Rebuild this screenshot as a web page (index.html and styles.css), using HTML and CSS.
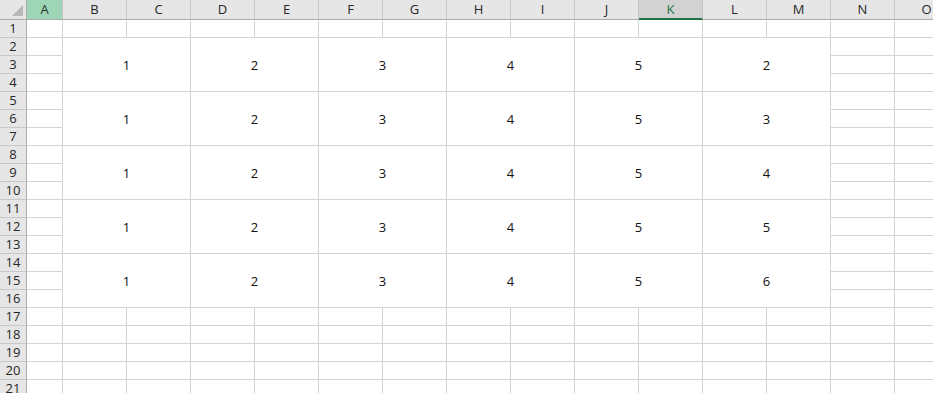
FILE: index.html
```html
<!DOCTYPE html>
<html lang="en">
<head>
  <meta charset="UTF-8">
  <title>Sheet1</title>
  <link rel="stylesheet" href="styles.css">
</head>
<body>

  <div id="sheet" class="sheet"></div>

  <script>
    const cols = ["A","B","C","D","E","F","G","H","I","J","K","L","M","N","O"];
    const rowCount = 21;
    const lastCol = [2, 3, 4, 5, 6];

    const sheet = document.getElementById("sheet");

    function cell(cls, text) {
      const el = document.createElement("div");
      el.className = cls;
      if (text !== undefined) el.textContent = text;
      sheet.appendChild(el);
      return el;
    }

    // header row
    cell("corner");
    cols.forEach(c => {
      let cls = "colhead";
      if (c === "A") cls += " colhead-active";
      if (c === "K") cls += " colhead-sel";
      cell(cls, c);
    });

    // body rows; merged blocks B:C, D:E ... L:M over rows 2-4, 5-7, ...
    for (let r = 1; r <= rowCount; r++) {
      cell("rowhead", r);
      const inBlock = r >= 2 && r <= 16;
      const blockTop = inBlock && (r - 2) % 3 === 0;
      const block = Math.floor((r - 2) / 3);
      for (let ci = 0; ci < cols.length; ci++) {
        if (inBlock && ci >= 1 && ci <= 12) {
          if (blockTop && ci % 2 === 1) {
            const n = (ci + 1) / 2;
            const v = n === 6 ? lastCol[block] : n;
            cell("cell merged", v);
          }
          continue;
        }
        cell("cell");
      }
    }
  </script>
</body>
</html>
```

FILE: styles.css
```css
body {
  margin: 0;
  padding: 0;
  background: #ffffff;
  font-family: 'Open Sans', 'Liberation Sans', sans-serif;
  overflow: hidden;
}

.sheet {
  display: grid;
  grid-template-columns: 27px 36px repeat(14, 64px);
  grid-template-rows: 20px repeat(21, 18px);
  width: 933px;
  height: 393px;
  overflow: hidden;
}

.sheet > div {
  box-sizing: border-box;
}

.corner {
  position: relative;
  background: #e6e6e6;
  border-right: 1px solid #ababab;
  border-bottom: 1px solid #ababab;
}

.corner::after {
  content: "";
  position: absolute;
  right: 3px;
  bottom: 3px;
  width: 0;
  height: 0;
  border-left: 11px solid transparent;
  border-bottom: 11px solid #b7b7b7;
}

.colhead {
  background: #e6e6e6;
  border-right: 1px solid #c6c6c6;
  border-bottom: 1px solid #ababab;
  color: #262626;
  font-size: 13px;
  line-height: 19px;
  text-align: center;
}

.colhead-active {
  background: #9fd5b7;
  color: #1e3a2a;
}

.colhead-sel {
  background: #d2d2d2;
  border-bottom: 2px solid #217346;
  color: #217346;
}

.rowhead {
  background: #e6e6e6;
  border-right: 1px solid #ababab;
  border-bottom: 1px solid #c8c8c8;
  color: #262626;
  font-size: 13px;
  line-height: 17px;
  text-align: center;
}

.cell {
  border-right: 1px solid #d4d4d4;
  border-bottom: 1px solid #d4d4d4;
  background: #ffffff;
}

.merged {
  grid-column: span 2;
  grid-row: span 3;
  display: flex;
  align-items: center;
  justify-content: center;
  color: #111111;
  font-size: 13px;
}
```
